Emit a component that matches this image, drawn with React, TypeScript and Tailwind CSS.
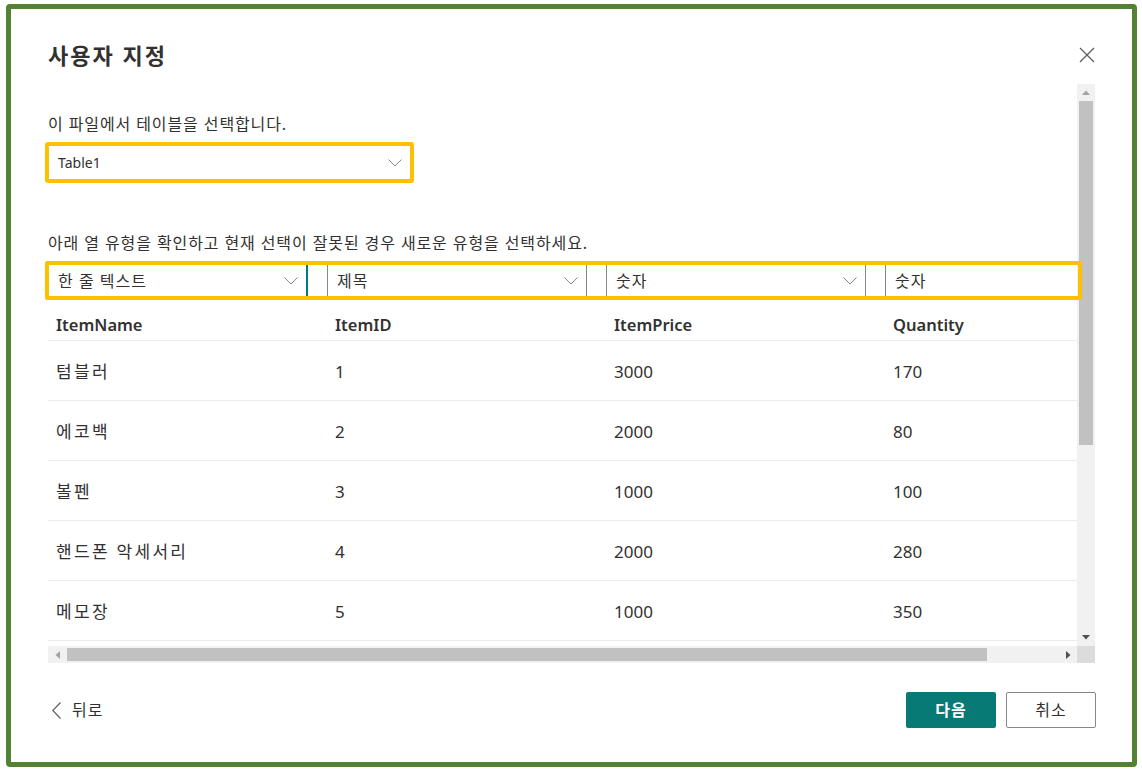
import React from "react";

const Chevron = () => (
  <svg width="14" height="8" viewBox="0 0 14 8" className="shrink-0">
    <polyline points="0.5,0.5 7,7 13.5,0.5" fill="none" stroke="#8a8886" strokeWidth="1" />
  </svg>
);

const cols = ["ItemName", "ItemID", "ItemPrice", "Quantity"];
const rows = [
  ["텀블러", "1", "3000", "170"],
  ["에코백", "2", "2000", "80"],
  ["볼펜", "3", "1000", "100"],
  ["핸드폰 악세서리", "4", "2000", "280"],
  ["메모장", "5", "1000", "350"],
];
const types = ["한 줄 텍스트", "제목", "숫자", "숫자"];

export default function App() {
  return (
    <div className="w-[1142px] h-[775px] bg-white pt-[4px] pl-[6px] pr-[5px] pb-[8px] font-['Noto_Sans','Noto_Sans_CJK_KR',sans-serif] text-[#323130]">
      <div className="h-full border-[5px] border-[#548235] rounded-[4px] flex flex-col pl-[37px] pr-[36px]">
        {/* Header */}
        <div className="pt-[32px] flex items-center justify-between">
          <h1 className="text-[22px] leading-[28px] font-semibold tracking-[2px]">사용자 지정</h1>
          <svg width="16" height="16" viewBox="0 0 16 16" className="mr-[1px]">
            <line x1="1" y1="1" x2="15" y2="15" stroke="#605e5c" strokeWidth="1.3" />
            <line x1="15" y1="1" x2="1" y2="15" stroke="#605e5c" strokeWidth="1.3" />
          </svg>
        </div>

        {/* Region */}
        <div className="relative mt-[15px] h-[579px] mr-[1px] flex flex-col">
          <div className="flex flex-1 min-h-0">
            <div className="flex-1 min-w-0 flex flex-col">
              <p className="pt-[30px] text-[16px] leading-[20px] tracking-[0.9px]">이 파일에서 테이블을 선택합니다.</p>
              <div className="mt-[8px] ml-[-3px] w-[369px] h-[41px] border-[4px] border-[#ffc000] rounded-[3px] flex items-center justify-between pl-[9px] pr-[8px]">
                <span className="text-[14px]">Table1</span>
                <Chevron />
              </div>
              <p className="mt-[50px] text-[16px] leading-[20px] tracking-[0.9px]">
                아래 열 유형을 확인하고 현재 선택이 잘못된 경우 새로운 유형을 선택하세요.
              </p>
              <div className="mt-[8px] flex-1 overflow-hidden">
                <div className="w-[1117px]">
                  <div className="flex h-[39px]">
                    {types.map((t, i) => (
                      <div key={i} className="w-[279px] shrink-0 h-full">
                        <div
                          className={
                            i === 0
                              ? "w-[260px] h-full border-l border-l-[#8a8886] border-r-2 border-r-[#03787c] flex items-center justify-between pl-[9px] pr-[8px]"
                              : "w-[260px] h-full border-x border-[#8a8886] flex items-center justify-between pl-[9px] pr-[8px]"
                          }
                        >
                          <span className="text-[16px] leading-[20px] tracking-[1px]">{t}</span>
                          {i < 3 && <Chevron />}
                        </div>
                      </div>
                    ))}
                  </div>
                  <div className="flex items-end h-[41px] pb-[5px] border-b border-[#edebe9]">
                    {cols.map((c) => (
                      <div key={c} className="w-[279px] shrink-0 pl-[8px] text-[16.5px] leading-[20px] font-semibold">
                        {c}
                      </div>
                    ))}
                  </div>
                  {rows.map((r, ri) => (
                    <div key={ri} className="flex items-center h-[60px] border-b border-[#edebe9] pt-[2px]">
                      {r.map((v, ci) => (
                        <div
                          key={ci}
                          className={
                            ci === 0
                              ? "w-[279px] shrink-0 pl-[8px] text-[17px] leading-[22px] tracking-[2.3px]"
                              : "w-[279px] shrink-0 pl-[8px] text-[17px] leading-[22px]"
                          }
                        >
                          {v}
                        </div>
                      ))}
                    </div>
                  ))}
                </div>
              </div>
            </div>
            {/* vertical scrollbar */}
            <div className="w-[18px] shrink-0 bg-[#f1f1f1] flex flex-col">
              <div className="h-[17px] flex items-center justify-center">
                <svg width="8" height="5" viewBox="0 0 8 5"><polygon points="0,5 4,0.5 8,5" fill="#a3a3a3" /></svg>
              </div>
              <div className="h-[344px] mx-[2px] bg-[#c1c1c1]" />
              <div className="flex-1" />
              <div className="h-[17px] flex items-center justify-center">
                <svg width="8" height="5" viewBox="0 0 8 5"><polygon points="0,0 8,0 4,4.5" fill="#505050" /></svg>
              </div>
            </div>
          </div>
          {/* horizontal scrollbar */}
          <div className="h-[17px] flex bg-[#f1f1f1]">
            <div className="w-[19px] flex items-center justify-center">
              <svg width="5" height="8" viewBox="0 0 5 8"><polygon points="5,0 5,8 0.5,4" fill="#a3a3a3" /></svg>
            </div>
            <div className="w-[920px] my-[2px] bg-[#c1c1c1]" />
            <div className="flex-1" />
            <div className="w-[17px] flex items-center justify-center">
              <svg width="5" height="8" viewBox="0 0 5 8"><polygon points="0,0 0,8 4.5,4" fill="#505050" /></svg>
            </div>
            <div className="w-[18px] bg-[#dcdcdc]" />
          </div>
          {/* highlight overlay */}
          <div className="absolute left-[-3px] top-[177px] w-[1037px] h-[39px] border-[4px] border-[#ffc000] rounded-[2px] pointer-events-none" />
        </div>

        {/* Footer */}
        <div className="mt-[29px] h-[36px] flex items-center justify-between">
          <div className="flex items-center pl-[4px] gap-[11px]">
            <svg width="9" height="17" viewBox="0 0 9 17">
              <polyline points="8.5,0.5 0.8,8.5 8.5,16.5" fill="none" stroke="#605e5c" strokeWidth="1.2" />
            </svg>
            <span className="text-[16px] leading-[20px] tracking-[1px]">뒤로</span>
          </div>
          <div className="flex gap-[10px]">
            <button className="w-[90px] h-[36px] bg-[#077a76] rounded-[2px] text-white text-[16px] font-bold tracking-[1px]">다음</button>
            <button className="w-[90px] h-[36px] bg-white border border-[#8a8886] rounded-[2px] text-[16px] tracking-[1px]">취소</button>
          </div>
        </div>
      </div>
    </div>
  );
}
